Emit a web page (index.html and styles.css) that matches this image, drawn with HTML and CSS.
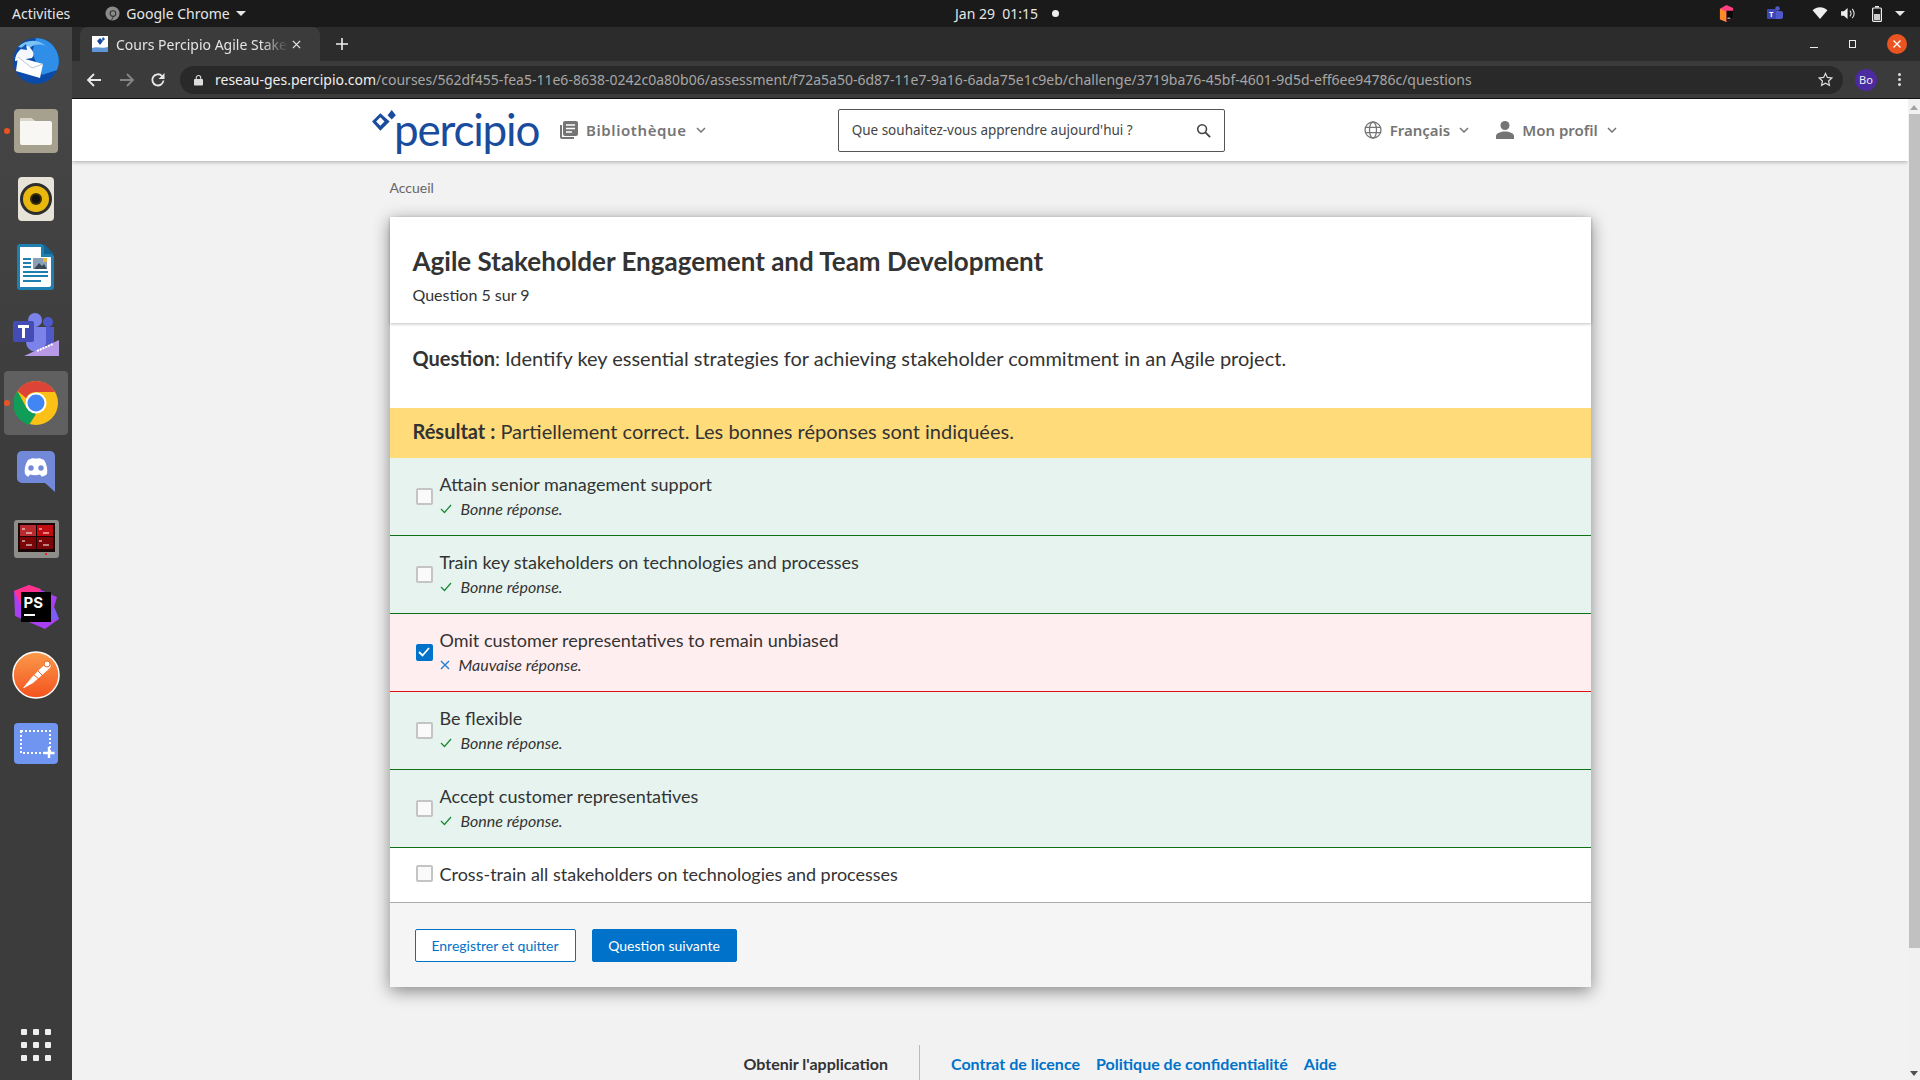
FILE: index.html
```html
<!DOCTYPE html>
<html lang="fr">
<head>
    <meta charset="UTF-8">
    <title>Cours Percipio Agile Stakeholder Engagement</title>
    <link rel="stylesheet" href="styles.css">
</head>
<body>
<div class="desktop">
    <div class="topbar">
        <span class="activities">Activities</span>
        <span class="app-menu">
            <svg class="chrome-mono" viewBox="0 0 16 16"><circle cx="8" cy="8" r="7.5" fill="#8b8b8b"/><circle cx="8.5" cy="8" r="3" fill="none" stroke="#333" stroke-width="1.2"/><path d="M9 11l-2 4" stroke="#333"/></svg>
            Google Chrome
            <i class="caret"></i>
        </span>
        <span class="clock">Jan 29&nbsp; 01:15<i class="clock-dot"></i></span>
        <div class="tray">
            <svg class="tray-toolbox" viewBox="0 0 16 18"><path d="M8 0l7 3v11l-7 4-7-3V4z" fill="#ff3f7f"/><path d="M1 4l7 3v11l-7-3z" fill="#ff8a2a"/><path d="M8 6h7v8l-7 4z" fill="#0a0a0a"/><path d="M9 14h3" stroke="#fff"/></svg>
            <svg class="tray-teams" viewBox="0 0 16 16"><circle cx="10.500" cy="2.500" r="2.300" fill="#5059c9"/><rect x="6" y="5" width="10" height="8" rx="2" fill="#5059c9"/><rect x="0" y="3" width="9" height="10" rx="1" fill="#3f46b5"/><text x="2.300" y="10.500" class="tray-t">T</text></svg>
            <svg class="tray-wifi" viewBox="0 0 16 14"><path d="M0 3.500C4.500-.8 11.500-.8 16 3.500L8 13z" fill="#eee"/></svg>
            <svg class="tray-vol" viewBox="0 0 16 14"><path d="M0 4.500h3L7 1v12L3 9.500H0z" fill="#eee"/><path d="M9.500 4c1.500 1.800 1.500 4.200 0 6M12 2c2.500 3 2.500 7 0 10" fill="none" stroke="#ddd" stroke-width="1.200"/></svg>
            <svg class="tray-bat" viewBox="0 0 10 16"><path d="M3 0h4v1.500H3z" fill="#eee"/><rect x=".6" y="2" width="8.800" height="13.400" rx="1" fill="none" stroke="#eee" stroke-width="1.200"/><rect x="2" y="8" width="6" height="6" fill="#ccc"/></svg>
            <i class="caret tray-caret"></i>
        </div>
    </div>

    <div class="workspace">
        <nav class="dock">
            <div class="dock-item first">
                <svg width="48" height="48" viewBox="0 0 48 48">
                    <circle cx="24" cy="24" r="23" fill="#0a4aa8"/>
                    <path d="M24 1a23 23 0 0 1 21 32L30 38 20 16z" fill="#2f8fe8"/>
                    <path d="M6 10C14 2 26 2 34 9c-8-3-14-1-17 3z" fill="#7cc3f5"/>
                    <path d="M3 24c0-8 6-14 13-15 5 4 7 8 4 12z" fill="#f4f7fb"/>
                    <path d="M6 20l25 7-3 14-24-7z" fill="#fff"/>
                    <path d="M6 20l14 11 11-4" fill="none" stroke="#b8c4d4" stroke-width="1"/>
                    <path d="M14 7l-6 5 7 1z" fill="#0f58b8"/>
                </svg>
            </div>
            <div class="dock-item running">
                <svg width="44" height="44" viewBox="0 0 44 44">
                    <rect width="44" height="44" rx="4" fill="#a6a08f"/>
                    <path d="M6 11a2 2 0 0 1 2-2h9l4 3h15a2 2 0 0 1 2 2v20a2 2 0 0 1-2 2H8a2 2 0 0 1-2-2z" fill="#f8f7f4"/>
                    <path d="M6 11a2 2 0 0 1 2-2h9l4 3H6z" fill="#d9d5ca"/>
                </svg>
            </div>
            <div class="dock-item">
                <svg width="36" height="44" viewBox="0 0 36 44">
                    <rect width="36" height="44" rx="4" fill="#e7e3d8"/>
                    <circle cx="18" cy="22" r="16" fill="#2e2e2e"/>
                    <circle cx="18" cy="22" r="13" fill="#e9b80f"/>
                    <circle cx="18" cy="22" r="6" fill="#3a3000"/>
                    <circle cx="18" cy="22" r="4" fill="#111"/>
                </svg>
            </div>
            <div class="dock-item">
                <svg width="38" height="46" viewBox="0 0 38 46">
                    <path d="M3 0h22l12 12v31a3 3 0 0 1-3 3H3a3 3 0 0 1-3-3V3a3 3 0 0 1 3-3z" fill="#1f7fb0"/>
                    <path d="M3 3h21v10h10v28a2 2 0 0 1-2 2H3z" fill="#fff"/>
                    <path d="M27 0l10 10H27z" fill="#14648f"/>
                    <rect x="6" y="14" width="8" height="2" fill="#1f7fb0"/><rect x="6" y="18" width="8" height="2" fill="#1f7fb0"/><rect x="6" y="22" width="8" height="2" fill="#1f7fb0"/>
                    <rect x="16" y="14" width="14" height="11" fill="#8aa0b8"/><path d="M17 25l5-6 3 3 2-2 3 5z" fill="#3a4a55"/><rect x="26" y="14" width="4" height="4" fill="#eab44a"/>
                    <rect x="6" y="27" width="25" height="2" fill="#1f7fb0"/><rect x="6" y="31" width="25" height="2" fill="#1f7fb0"/><rect x="6" y="36" width="18" height="2" fill="#1f7fb0"/>
                </svg>
            </div>
            <div class="dock-item">
                <svg width="46" height="44" viewBox="0 0 46 44">
                    <circle cx="22" cy="7" r="7" fill="#7b83eb"/>
                    <circle cx="35" cy="9" r="5" fill="#5059c9"/>
                    <path d="M27 14h14v14a4 4 0 0 1-4 4H27z" fill="#5059c9"/>
                    <path d="M13 14h20v15a10 10 0 0 1-20 0z" fill="#7b83eb"/>
                    <rect x="0" y="8" width="21" height="21" rx="2" fill="#444db5"/>
                    <path d="M5 12h11v3h-4v10H9V15H5z" fill="#fff"/>
                    <path d="M11 43l35-16v16z" fill="#b69ae6"/>
                    <path d="M24 38l16-7" stroke="#fff" stroke-width="2" stroke-dasharray="2 1"/>
                </svg>
            </div>
            <div class="dock-item running active">
                <svg width="44" height="44" viewBox="0 0 44 44">
                    <circle cx="22" cy="22" r="22" fill="#fbc116"/>
                    <path d="M22 0a22 22 0 0 1 19 11H22a11 11 0 0 0-10 6L3.500 10A22 22 0 0 1 22 0z" fill="#db4437"/>
                    <path d="M3.500 10L12.500 27 22 33 15 44A22 22 0 0 1 3.500 10z" fill="#0f9d58"/>
                    <circle cx="22" cy="22" r="10.500" fill="#fff"/>
                    <circle cx="22" cy="22" r="8.500" fill="#4285f4"/>
                </svg>
            </div>
            <div class="dock-item">
                <svg width="38" height="41" viewBox="0 0 38 41">
                    <path d="M5 0h28a5 5 0 0 1 5 5v36L28 32H5a5 5 0 0 1-5-5V5a5 5 0 0 1 5-5z" fill="#7289da"/>
                    <path d="M8 23c-1-6 1-11 3-14 3-1.500 5-2 6-1.500h4c1-.5 3 0 6 1.500 2 3 4 8 3 14-2 2-4 2.500-5.500 2.500l-1.500-2c-3 1-7 1-10 0l-1.500 2C10 25.500 10 25 8 23z" fill="#fff"/>
                    <circle cx="14" cy="17" r="2.700" fill="#7289da"/><circle cx="24" cy="17" r="2.700" fill="#7289da"/>
                </svg>
            </div>
            <div class="dock-item">
                <svg width="45" height="38" viewBox="0 0 45 38">
                    <rect width="45" height="38" rx="3" fill="#8d8d8a"/>
                    <rect x="4" y="3" width="37" height="29" fill="#1a0506"/>
                    <rect x="6" y="5" width="16" height="11" fill="#b82a2e"/><rect x="23" y="5" width="16" height="11" fill="#c00d12"/>
                    <rect x="6" y="17" width="16" height="12" fill="#7c0508"/><rect x="23" y="17" width="16" height="12" fill="#7c0508"/>
                    <path d="M8 9h3M8 21h3M25 9h3M25 21h3M12 13h6M29 13h6M12 25h6M29 25h6" stroke="#fff"/>
                    <rect x="31" y="33" width="2" height="2" fill="#e22"/>
                </svg>
            </div>
            <div class="dock-item">
                <svg width="48" height="48" viewBox="0 0 48 48">
                    <path d="M2 8l15-6 28 12-3 10 5 12-14 10-30-13z" fill="#a83ff0"/>
                    <path d="M2 8l15-6 12 4-16 24z" fill="#ff318c"/>
                    <path d="M32 38l15-2-5-12z" fill="#7b5cf5"/>
                    <rect x="9" y="9" width="30" height="30" fill="#000"/>
                    <text x="11.500" y="25" class="ps-text">PS</text>
                    <rect x="12" y="31" width="11" height="2" fill="#fff"/>
                </svg>
            </div>
            <div class="dock-item">
                <svg width="48" height="48" viewBox="0 0 48 48">
                    <defs><linearGradient id="pm" x1="0" y1="0" x2="0" y2="1"><stop offset="0" stop-color="#fb9a4b"/><stop offset="1" stop-color="#f4521e"/></linearGradient></defs>
                    <circle cx="24" cy="24" r="23" fill="url(#pm)" stroke="#fff" stroke-width="1.500"/>
                    <path d="M11 37l9-11 9-9c3-3 6-5 8-5 2 1 2 3 1 5l-9 8-8 7-9 5z" fill="#fff"/>
                    <path d="M22 24l6 5M26 20l5 5" stroke="#f4621e" stroke-width="1"/>
                    <circle cx="35" cy="13" r="3" fill="#fff" stroke="#f4621e"/>
                </svg>
            </div>
            <div class="dock-item">
                <svg width="44" height="41" viewBox="0 0 44 41">
                    <rect width="44" height="41" rx="4" fill="#6f95f0"/>
                    <rect x="7" y="8" width="29" height="22" fill="none" stroke="#fff" stroke-width="2" stroke-dasharray="2 2"/>
                    <path d="M35 24v11M29.500 30h11" stroke="#fff" stroke-width="2.400"/>
                </svg>
            </div>
            <div class="app-grid">
                <i></i><i></i><i></i><i></i><i></i><i></i><i></i><i></i><i></i>
            </div>
        </nav>

        <div class="browser">
            <div class="tabstrip">
                <div class="tab">
                    <svg class="favicon" viewBox="0 0 16 16"><rect width="16" height="16" fill="#fff"/><path d="M8 2l3 3-3 4-3-4z" fill="#1a4c9e"/><path d="M11 1l2 2-2 2-1-2z" fill="#1a4c9e"/><path d="M0 12c5-2 10 1 16-1v5H0z" fill="#5f97d6"/></svg>
                    <span class="tab-title">Cours Percipio Agile Stakeholder Engagement</span>
                    <svg class="tab-close" viewBox="0 0 10 10"><path d="M1 1l8 8M9 1l-8 8" stroke="#e8e8e8" stroke-width="1.400"/></svg>
                </div>
                <svg class="new-tab" viewBox="0 0 12 12"><path d="M6 0v12M0 6h12" stroke="#eee" stroke-width="1.600"/></svg>
                <div class="window-controls">
                    <i class="win-min"></i>
                    <i class="win-max"></i>
                    <svg class="win-close" viewBox="0 0 20 20"><circle cx="10" cy="10" r="10" fill="#e95420"/><path d="M6.500 6.500l7 7M13.500 6.500l-7 7" stroke="#fff" stroke-width="1.400"/></svg>
                </div>
            </div>

            <div class="toolbar">
                <svg class="nav-icon back" viewBox="0 0 16 16"><path d="M15 8H2M8 2L2 8l6 6" fill="none" stroke="#e8e8e8" stroke-width="1.800"/></svg>
                <svg class="nav-icon forward" viewBox="0 0 16 16"><path d="M1 8h13M8 2l6 6-6 6" fill="none" stroke="#858585" stroke-width="1.800"/></svg>
                <svg class="nav-icon reload" viewBox="0 0 16 16"><path d="M13.500 8.500A5.600 5.600 0 1 1 12 4" fill="none" stroke="#e8e8e8" stroke-width="1.800"/><path d="M14.500 1v6h-6z" fill="#e8e8e8"/></svg>
                <div class="omnibox">
                    <svg class="lock" viewBox="0 0 10 12"><path d="M2.500 5V3.500a2.500 2.500 0 0 1 5 0V5" fill="none" stroke="#ddd" stroke-width="1.200"/><rect y="5" width="10" height="7" rx="1" fill="#ddd"/></svg>
                    <span class="url"><b>reseau-ges.percipio.com</b>/courses/562df455-fea5-11e6-8638-0242c0a80b06/assessment/f72a5a50-6d87-11e7-9a16-6ada75e1c9eb/challenge/3719ba76-45bf-4601-9d5d-eff6ee94786c/questions</span>
                    <svg class="star" viewBox="0 0 16 16"><path d="M8 1.500l2 4.300 4.700.6-3.400 3.200.9 4.700L8 12l-4.200 2.300.9-4.700L1.300 6.400 6 5.800z" fill="none" stroke="#ddd" stroke-width="1.300"/></svg>
                </div>
                <span class="avatar">Bo</span>
                <span class="kebab"><i></i><i></i><i></i></span>
            </div>

            <div class="viewport">
                <div class="page">
                    <header class="site-header">
                        <div class="logo">
                            <svg class="logo-mark" viewBox="0 0 28 22"><path d="M9 3l9 8-9 9-8-9z" fill="#1a4c9e"/><path d="M9 7l4 4-4 4-4-4z" fill="#fff"/><path d="M20 0l4 5-4 4-4-4z" fill="#1a4c9e"/></svg>
                            <span class="logo-text">percipio</span>
                        </div>
                        <a class="nav-link library">
                            <svg class="nav-glyph" viewBox="0 0 18 18"><path d="M0 4h2v12h12v2H2a2 2 0 0 1-2-2z" fill="#757575"/><path d="M5 0h11a2 2 0 0 1 2 2v11a2 2 0 0 1-2 2H5a2 2 0 0 1-2-2V2a2 2 0 0 1 2-2z" fill="#757575"/><path d="M6 4h9M6 7.500h9M6 11h6" stroke="#fff" stroke-width="1.500"/></svg>
                            Bibliothèque
                            <svg class="chevron" viewBox="0 0 10 6"><path d="M1 1l4 4 4-4" fill="none" stroke="#757575" stroke-width="1.500"/></svg>
                        </a>
                        <div class="search">
                            <span>Que souhaitez-vous apprendre aujourd'hui ?</span>
                            <svg class="search-icon" viewBox="0 0 16 16"><circle cx="6.500" cy="6.500" r="4.700" fill="none" stroke="#444" stroke-width="1.700"/><path d="M10 10l5 5" stroke="#444" stroke-width="2"/></svg>
                        </div>
                        <a class="nav-link lang">
                            <svg class="nav-glyph" viewBox="0 0 18 18"><g fill="none" stroke="#757575" stroke-width="1.300"><circle cx="9" cy="9" r="8"/><ellipse cx="9" cy="9" rx="3.500" ry="8"/><path d="M1.500 6.300h15M1.500 11.700h15"/></g></svg>
                            Français
                            <svg class="chevron" viewBox="0 0 10 6"><path d="M1 1l4 4 4-4" fill="none" stroke="#757575" stroke-width="1.500"/></svg>
                        </a>
                        <a class="nav-link profile">
                            <svg class="nav-glyph" viewBox="0 0 18 18"><circle cx="9" cy="4.500" r="4.500" fill="#757575"/><path d="M0 18v-3c0-3 5-4.500 9-4.500s9 1.500 9 4.500v3z" fill="#757575"/></svg>
                            Mon profil
                            <svg class="chevron" viewBox="0 0 10 6"><path d="M1 1l4 4 4-4" fill="none" stroke="#757575" stroke-width="1.500"/></svg>
                        </a>
                    </header>

                    <main class="content">
                        <div class="breadcrumb">Accueil</div>
                        <section class="card">
                            <div class="card-head">
                                <h1>Agile Stakeholder Engagement and Team Development</h1>
                                <p>Question 5 sur 9</p>
                            </div>
                            <div class="question"><b>Question</b>: Identify key essential strategies for achieving stakeholder commitment in an Agile project.</div>
                            <div class="result"><b>Résultat :</b> Partiellement correct. Les bonnes réponses sont indiquées.</div>

                            <div class="answer good">
                                <span class="checkbox"></span>
                                <div>
                                    <div class="answer-text">Attain senior management support</div>
                                    <div class="feedback"><svg class="mark" viewBox="0 0 12 10"><path d="M1 5l3.500 3.500L11 1" fill="none" stroke="#1c8a3a" stroke-width="1.300"/></svg><em>Bonne réponse.</em></div>
                                </div>
                            </div>
                            <div class="answer good">
                                <span class="checkbox"></span>
                                <div>
                                    <div class="answer-text">Train key stakeholders on technologies and processes</div>
                                    <div class="feedback"><svg class="mark" viewBox="0 0 12 10"><path d="M1 5l3.500 3.500L11 1" fill="none" stroke="#1c8a3a" stroke-width="1.300"/></svg><em>Bonne réponse.</em></div>
                                </div>
                            </div>
                            <div class="answer bad">
                                <span class="checkbox checked"><svg viewBox="0 0 12 10"><path d="M1 5l3.500 3.500L11 1" fill="none" stroke="#fff" stroke-width="1.800"/></svg></span>
                                <div>
                                    <div class="answer-text">Omit customer representatives to remain unbiased</div>
                                    <div class="feedback"><svg class="mark cross" viewBox="0 0 10 10"><path d="M1 1l8 8M9 1l-8 8" stroke="#1f7fd0" stroke-width="1.400"/></svg><em>Mauvaise réponse.</em></div>
                                </div>
                            </div>
                            <div class="answer good">
                                <span class="checkbox"></span>
                                <div>
                                    <div class="answer-text">Be flexible</div>
                                    <div class="feedback"><svg class="mark" viewBox="0 0 12 10"><path d="M1 5l3.500 3.500L11 1" fill="none" stroke="#1c8a3a" stroke-width="1.300"/></svg><em>Bonne réponse.</em></div>
                                </div>
                            </div>
                            <div class="answer good">
                                <span class="checkbox"></span>
                                <div>
                                    <div class="answer-text">Accept customer representatives</div>
                                    <div class="feedback"><svg class="mark" viewBox="0 0 12 10"><path d="M1 5l3.500 3.500L11 1" fill="none" stroke="#1c8a3a" stroke-width="1.300"/></svg><em>Bonne réponse.</em></div>
                                </div>
                            </div>
                            <div class="answer plain">
                                <span class="checkbox"></span>
                                <div class="answer-text">Cross-train all stakeholders on technologies and processes</div>
                            </div>

                            <div class="card-actions">
                                <button class="btn btn-outline">Enregistrer et quitter</button>
                                <button class="btn btn-primary">Question suivante</button>
                            </div>
                        </section>

                        <footer class="site-footer">
                            <b>Obtenir l'application</b>
                            <span class="footer-sep"></span>
                            <a>Contrat de licence</a>
                            <a>Politique de confidentialité</a>
                            <a>Aide</a>
                        </footer>
                    </main>
                </div>
                <div class="scrollbar">
                    <i class="arrow-up"></i>
                    <div class="thumb"></div>
                    <i class="arrow-down"></i>
                </div>
            </div>
        </div>
    </div>
</div>
</body>
</html>
```

FILE: styles.css
```css
* {
    box-sizing: border-box;
}
html, body {
    margin: 0;
    height: 100%;
    overflow: hidden;
}
body {
    font-family: "Lato", "Noto Sans", sans-serif;
    color: #333;
}
.desktop {
    width: 1920px;
    height: 1080px;
    display: flex;
    flex-direction: column;
    overflow: hidden;
}

/* top bar */
.topbar {
    height: 27px;
    flex: none;
    background: #1a1a1a;
    color: #e6e6e6;
    font-family: "Noto Sans", sans-serif;
    font-size: 14px;
    display: flex;
    align-items: center;
    position: relative;
}
.activities {
    margin-left: 12px;
}
.app-menu {
    margin-left: 35px;
    display: flex;
    align-items: center;
}
.chrome-mono {
    width: 15px;
    height: 15px;
    margin-right: 6px;
}
.caret {
    display: inline-block;
    border-left: 5px solid transparent;
    border-right: 5px solid transparent;
    border-top: 5px solid #e6e6e6;
    margin-left: 6px;
}
.clock {
    position: absolute;
    left: 955px;
    top: 4px;
    display: flex;
    align-items: center;
}
.clock-dot {
    width: 7px;
    height: 7px;
    border-radius: 50%;
    background: #eee;
    margin-left: 14px;
}
.tray {
    margin-left: auto;
    display: flex;
    align-items: center;
}
.tray-toolbox {
    width: 15px;
    height: 17px;
    margin-right: 33px;
}
.tray-teams {
    width: 16px;
    height: 16px;
    margin-right: 29px;
}
.tray-t {
    font-size: 7px;
    font-weight: 700;
    fill: #fff;
}
.tray-wifi {
    width: 16px;
    height: 13px;
    margin-right: 13px;
}
.tray-vol {
    width: 15px;
    height: 13px;
    margin-right: 16px;
}
.tray-bat {
    width: 10px;
    height: 16px;
    margin-right: 13px;
}
.tray-caret {
    margin: 0 15px 0 0;
}

.workspace {
    flex: 1;
    display: flex;
    min-height: 0;
}

/* dock */
.dock {
    width: 72px;
    flex: none;
    background: linear-gradient(#474747, #3c3c3c 40%);
    display: flex;
    flex-direction: column;
    align-items: center;
}
.dock-item {
    height: 68px;
    width: 100%;
    flex: none;
    display: flex;
    align-items: center;
    justify-content: center;
    position: relative;
}
.dock-item.first {
    margin-bottom: 2px;
}
.dock-item.running::before {
    content: "";
    position: absolute;
    left: 4px;
    top: 31px;
    width: 6px;
    height: 6px;
    border-radius: 50%;
    background: #e95420;
    z-index: 1;
}
.dock-item.active::after {
    content: "";
    position: absolute;
    left: 4px;
    right: 4px;
    top: 2px;
    bottom: 2px;
    border-radius: 4px;
    background: rgba(255, 255, 255, .18);
}
.dock-item svg {
    position: relative;
    z-index: 1;
}
.ps-text {
    font-family: "Inter", sans-serif;
    font-size: 15px;
    font-weight: 700;
    fill: #fff;
}
.app-grid {
    margin-top: auto;
    margin-bottom: 19px;
    display: grid;
    grid-template-columns: repeat(3, 6px);
    gap: 7px 6px;
}
.app-grid i {
    width: 6px;
    height: 6px;
    border-radius: 1px;
    background: #eee;
}

/* browser */
.browser {
    flex: 1;
    min-width: 0;
    display: flex;
    flex-direction: column;
}
.tabstrip {
    height: 34px;
    flex: none;
    background: #2c2c2c;
    display: flex;
    align-items: center;
    padding-left: 8px;
}
.tab {
    width: 240px;
    height: 34px;
    background: #3b3b3b;
    border-radius: 8px 8px 0 0;
    display: flex;
    align-items: center;
    padding-left: 12px;
    color: #e4e4e4;
    font-family: "Noto Sans", sans-serif;
    font-size: 14px;
}
.favicon {
    width: 16px;
    height: 16px;
    flex: none;
}
.tab-title {
    margin-left: 8px;
    width: 172px;
    overflow: hidden;
    white-space: nowrap;
    -webkit-mask-image: linear-gradient(to right, #000 85%, transparent);
}
.tab-close {
    width: 9px;
    height: 9px;
    margin-left: 4px;
}
.new-tab {
    width: 12px;
    height: 12px;
    margin-left: 16px;
}
.window-controls {
    margin-left: auto;
    display: flex;
    align-items: center;
}
.win-min {
    width: 8px;
    height: 1px;
    background: #eee;
    margin-top: 6px;
}
.win-max {
    width: 7px;
    height: 8px;
    border: 1px solid #eee;
    margin-left: 31px;
}
.win-close {
    width: 20px;
    height: 20px;
    margin: 0 13px 0 31px;
}

.toolbar {
    height: 38px;
    flex: none;
    background: #3b3b3b;
    border-bottom: 1px solid #111;
    display: flex;
    align-items: center;
    padding-left: 14px;
}
.nav-icon {
    width: 16px;
    height: 16px;
    flex: none;
}
.forward {
    margin-left: 17px;
}
.reload {
    margin-left: 15px;
}
.omnibox {
    width: 1663px;
    height: 28px;
    margin-left: 14px;
    border-radius: 14px;
    background: #292929;
    display: flex;
    align-items: center;
    padding-left: 14px;
    font-family: "Noto Sans", sans-serif;
    font-size: 14px;
    color: #a6a6a6;
}
.lock {
    width: 9px;
    height: 12px;
    flex: none;
}
.url {
    margin-left: 12px;
    white-space: nowrap;
}
.url b {
    font-weight: 400;
    color: #eee;
}
.star {
    width: 15px;
    height: 15px;
    margin-left: auto;
    margin-right: 10px;
}
.avatar {
    width: 22px;
    height: 22px;
    margin-left: 12px;
    border-radius: 50%;
    background: #4a2ca0;
    color: #eee;
    font-family: "Noto Sans", sans-serif;
    font-size: 11px;
    display: flex;
    align-items: center;
    justify-content: center;
}
.kebab {
    margin-left: 21px;
    display: flex;
    flex-direction: column;
    gap: 2px;
}
.kebab i {
    width: 3px;
    height: 3px;
    border-radius: 50%;
    background: #ddd;
}

/* page */
.viewport {
    flex: 1;
    min-height: 0;
    display: flex;
    background: #f2f2f2;
}
.page {
    flex: 1;
    min-width: 0;
    overflow: hidden;
}
.scrollbar {
    width: 12px;
    flex: none;
    background: #f1f1f1;
    display: flex;
    flex-direction: column;
    align-items: center;
}
.arrow-up {
    margin-top: 6px;
    border-left: 4px solid transparent;
    border-right: 4px solid transparent;
    border-bottom: 5px solid #a3a3a3;
}
.thumb {
    width: 11px;
    height: 834px;
    margin-top: 4px;
    background: #c1c1c1;
}
.arrow-down {
    margin-top: auto;
    margin-bottom: 4px;
    border-left: 4px solid transparent;
    border-right: 4px solid transparent;
    border-top: 5px solid #505050;
}

.site-header {
    height: 62px;
    background: #fff;
    box-shadow: 0 1px 4px rgba(0, 0, 0, .3);
    display: flex;
    align-items: center;
    padding-left: 299px;
    position: relative;
    color: #757575;
}
.logo {
    width: 159px;
    height: 40px;
    flex: none;
    position: relative;
}
.logo-mark {
    position: absolute;
    left: 0;
    top: 0;
    width: 29px;
    height: 23px;
}
.logo-text {
    position: absolute;
    left: 23px;
    top: -7px;
    font-family: "Lato", sans-serif;
    font-size: 44px;
    letter-spacing: -1.2px;
    color: #1a4c9e;
}
.nav-link {
    display: flex;
    align-items: center;
    font-family: "Noto Sans", sans-serif;
    font-size: 15px;
    font-weight: 600;
    white-space: nowrap;
}
.nav-glyph {
    width: 18px;
    height: 18px;
    margin-right: 8px;
}
.chevron {
    width: 10px;
    height: 6px;
    margin-left: 9px;
}
.library {
    margin-left: 30px;
    letter-spacing: .6px;
}
.search {
    width: 387px;
    height: 43px;
    margin-left: 132px;
    border: 1px solid #555;
    border-radius: 2px;
    display: flex;
    align-items: center;
    padding: 0 13px;
    font-family: "Noto Sans", sans-serif;
    font-size: 13.500px;
    color: #444;
}
.search-icon {
    width: 15px;
    height: 15px;
    margin-left: auto;
}
.lang {
    margin-left: 139px;
}
.profile {
    margin-left: 27px;
}

.content {
    width: 1201px;
    margin: 0 auto;
    height: 919px;
}
.breadcrumb {
    height: 56px;
    padding-top: 18px;
    font-size: 14px;
    color: #666;
}
.card {
    background: #fff;
    box-shadow: 0 4px 16px rgba(0, 0, 0, .45);
}
.card-head {
    height: 106px;
    padding: 27px 23px 0;
    box-shadow: 0 1px 3px rgba(0, 0, 0, .25);
    position: relative;
}
.card-head h1 {
    margin: 0;
    font-size: 26px;
    line-height: 34px;
    font-weight: 700;
}
.card-head p {
    margin: 7px 0 0;
    font-size: 16px;
    line-height: 20px;
}
.question {
    height: 85px;
    padding: 21px 23px 0;
    font-size: 20px;
    line-height: 28px;
}
.result {
    height: 50px;
    padding: 0 23px;
    background: #ffdb7a;
    font-size: 20px;
    line-height: 46px;
}
.answer {
    height: 78px;
    display: flex;
    align-items: center;
    padding: 0 0 1px 26px;
    border-bottom: 1px solid;
}
.answer.good {
    background: #e6f3ef;
    border-color: #0f7018;
}
.answer.bad {
    background: #ffeef0;
    border-color: #e01010;
}
.answer.plain {
    height: 55px;
    border-color: #aaa;
    padding-bottom: 3px;
}
.answer-text {
    font-size: 18px;
    line-height: 24px;
}
.checkbox {
    width: 17px;
    height: 17px;
    flex: none;
    margin-right: 7px;
    border: 2px solid #c4c4c4;
    border-radius: 2px;
    background: #fafafa;
    display: flex;
    align-items: center;
    justify-content: center;
}
.checkbox.checked {
    background: #0072c9;
    border-color: #0072c9;
}
.checkbox svg {
    width: 12px;
    height: 10px;
}
.feedback {
    display: flex;
    align-items: center;
    font-size: 16px;
    line-height: 22px;
    margin-top: 2px;
}
.mark {
    width: 12px;
    height: 10px;
    margin-right: 9px;
}
.mark.cross {
    width: 10px;
    margin-right: 9px;
}
.card-actions {
    height: 84px;
    background: #f5f5f5;
    display: flex;
    align-items: center;
    gap: 16px;
    padding: 0 0 0 25px;
}
.btn {
    height: 33px;
    border-radius: 2px;
    border: 1px solid #0072c9;
    font-family: "Lato", sans-serif;
    font-size: 14px;
    padding: 0;
}
.btn-outline {
    width: 161px;
    background: #fff;
    color: #0072c9;
}
.btn-primary {
    width: 145px;
    background: #0072c9;
    color: #fff;
}

.site-footer {
    margin-top: 58px;
    height: 36px;
    display: flex;
    align-items: center;
    padding-left: 354px;
    font-size: 16px;
}
.site-footer a {
    color: #0072c9;
    font-weight: 700;
    margin-right: 16px;
}
.footer-sep {
    width: 1px;
    height: 36px;
    background: #bbb;
    margin: 0 31px;
}
```
